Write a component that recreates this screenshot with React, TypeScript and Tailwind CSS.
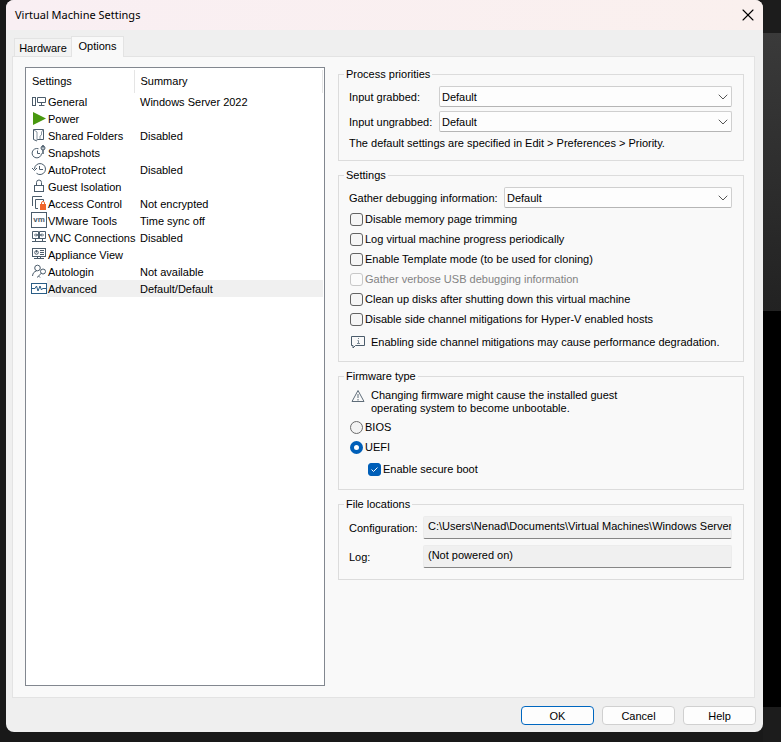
import React, { useState } from "react";
import { ChevronDown, X } from "lucide-react";

type Row = { name: string; summary?: string; icon: React.ReactNode };

const rows: Row[] = [
  {
    name: "General",
    summary: "Windows Server 2022",
    icon: (
      <>
        <rect x="1.5" y="4.5" width="3" height="8" />
        <path d="M6.5 4.5h8v5h-8zM10.5 9.5v3M8 12.5h5.5" />
      </>
    ),
  },
  { name: "Power", icon: <path d="M2 2v13l13-6.500z" fill="#48980f" stroke="none" /> },
  {
    name: "Shared Folders",
    summary: "Disabled",
    icon: (
      <>
        <path d="M6 12.500h6.500v-10h-10v10l3.500 1.500" />
        <path d="M3 3l3 2v8.500M12 3l-1.500 2v3L9 9v3" stroke="#8b98a3" />
      </>
    ),
  },
  {
    name: "Snapshots",
    icon: (
      <>
        <path d="M7.500 4.800A4.700 4.700 0 1 0 10.500 9.500" />
        <path d="M6.500 6.500v3H9" />
        <circle cx="12" cy="4" r="2" fill="#c3cad0" />
        <path d="M12 1v2.500M12 6v4" strokeWidth="1.500" />
      </>
    ),
  },
  {
    name: "AutoProtect",
    summary: "Disabled",
    icon: (
      <>
        <path d="M3.500 8a5.500 5.500 0 1 1 2 4.300" />
        <path d="M1 7l2.500 2.500L6 7M8.500 5v3.500H12" />
      </>
    ),
  },
  {
    name: "Guest Isolation",
    icon: (
      <>
        <rect x="3.500" y="7.500" width="9" height="6" />
        <path d="M5.500 7.500v-3a2.500 2.500 0 0 1 5 0v3" />
      </>
    ),
  },
  {
    name: "Access Control",
    summary: "Not encrypted",
    icon: (
      <>
        <path d="M1.500 11v-9.500h9.500M4.500 13.500v-9h8v1.500M7 13.500H4.500" />
        <rect x="9" y="9" width="6" height="6" fill="#f1652a" stroke="none" />
        <path d="M10.500 9.500V8a1.500 1.500 0 0 1 3 0v1.500" stroke="#f1652a" />
      </>
    ),
  },
  {
    name: "VMware Tools",
    summary: "Time sync off",
    icon: (
      <>
        <rect x="0.500" y="0.500" width="15" height="15" fill="#fff" />
        <text
          x="8"
          y="10"
          textAnchor="middle"
          fontSize="8"
          fontWeight="bold"
          fill="#4b5c6b"
          stroke="none"
        >
          vm
        </text>
      </>
    ),
  },
  {
    name: "VNC Connections",
    summary: "Disabled",
    icon: (
      <>
        <path d="M7.500 2.500h-6v7h13v-7h-6M7.500 2.500v7M8.500 2.500v7" />
        <path d="M3 6h4M13 6H9M5 4.500L6.500 6 5 7.500M11 4.500L9.500 6 11 7.500" />
        <path d="M4.500 9.500v3M11.500 9.500v3M1 12.500h14" />
      </>
    ),
  },
  {
    name: "Appliance View",
    icon: (
      <>
        <rect x="1.500" y="2.500" width="13" height="8" />
        <circle cx="5.500" cy="6.500" r="1.800" />
        <path d="M9 4.500h4M9 6.500h4M9 8.500h4M5.500 4v2.500M6.500 10.500v2M9.500 10.500v2M3 12.500h10" />
      </>
    ),
  },
  {
    name: "Autologin",
    summary: "Not available",
    icon: (
      <>
        <circle cx="6.500" cy="5" r="2.800" />
        <path d="M1.500 13c.3-3 1.800-4.500 4-5" />
        <circle cx="12" cy="8.500" r="2.500" />
        <path d="M10.300 10.300L6 14.500M7.500 13l1.500 1.500" />
      </>
    ),
  },
  {
    name: "Advanced",
    summary: "Default/Default",
    icon: (
      <g stroke="#2a5d86">
        <rect x="0.500" y="3.500" width="15" height="10" fill="#fff" />
        <path d="M1 8.500h3l1.500-2.500 1.500 5 2-5 1.500 4 1-1.500H15" />
      </g>
    ),
  },
];

const debugOptions = [
  { label: "Disable memory page trimming" },
  { label: "Log virtual machine progress periodically" },
  { label: "Enable Template mode (to be used for cloning)" },
  { label: "Gather verbose USB debugging information", disabled: true },
  { label: "Clean up disks after shutting down this virtual machine" },
  { label: "Disable side channel mitigations for Hyper-V enabled hosts" },
];

export default function App() {
  const [selected, setSelected] = useState("Advanced");
  const [firmware, setFirmware] = useState("UEFI");

  return (
    <div className="flex min-h-screen bg-[#191919] pl-1.5 font-['Liberation_Sans',sans-serif] text-[11px] leading-[14px] text-black">
      <div className="flex flex-1 flex-col pb-[10px]">
        <div className="flex flex-1 flex-col overflow-hidden rounded-lg bg-[#efefef]">
          <header className="flex h-[30px] items-center justify-between bg-linear-to-r from-[#f9eff3] to-[#faf0ee] pr-[5px] pl-[9px]">
            <h1 className="font-['Noto_Sans',sans-serif] text-[11px]">Virtual Machine Settings</h1>
            <button type="button" aria-label="Close">
              <X size={20} strokeWidth={1.300} />
            </button>
          </header>

          <div className="flex flex-1 flex-col px-1.5 pt-1.5">
            <div className="relative z-10 -mb-px flex items-end pl-0.5" role="tablist">
              <button
                type="button"
                role="tab"
                aria-selected={false}
                className="h-[19px] w-[57px] border border-r-0 border-[#e3e3e3] bg-[#f3f3f3]"
              >
                Hardware
              </button>
              <button
                type="button"
                role="tab"
                aria-selected
                className="h-[21px] w-[53px] border border-b-0 border-[#e3e3e3] bg-[#f9f9f9] pb-0.5"
              >
                Options
              </button>
            </div>

            <main className="mr-0.5 flex flex-1 gap-[13px] border border-[#e3e3e3] bg-[#f9f9f9] pt-2.5 pr-2.5 pb-[11px] pl-3">
              <div className="w-[300px] shrink-0 border border-[#82878f] bg-white px-px pt-0.5">
                <table className="w-full table-fixed border-collapse text-left">
                  <colgroup>
                    <col className="w-5" />
                    <col className="w-[87px]" />
                    <col />
                  </colgroup>
                  <thead>
                    <tr className="h-[23px]">
                      <th colSpan={2} className="border-r border-[#e5e5e5] pb-0.5 pl-[5px] font-normal">
                        Settings
                      </th>
                      <th className="border-r border-[#e5e5e5] pb-0.5 pl-1.5 font-normal">Summary</th>
                    </tr>
                  </thead>
                  <tbody>
                    {rows.map((row) => (
                      <tr key={row.name} className="h-[17px]" onClick={() => setSelected(row.name)}>
                        <td className="p-0">
                          <svg
                            className="ml-1 block"
                            width="16"
                            height="17"
                            viewBox="0 0 16 17"
                            fill="none"
                            stroke="#4b5c6b"
                          >
                            {row.icon}
                          </svg>
                        </td>
                        <td
                          className={
                            "p-0 pl-px whitespace-nowrap " +
                            (selected === row.name ? "bg-[#f0f0f0]" : "")
                          }
                        >
                          {row.name}
                        </td>
                        <td className={"p-0 pl-1.5 " + (selected === row.name ? "bg-[#f0f0f0]" : "")}>
                          {row.summary}
                        </td>
                      </tr>
                    ))}
                  </tbody>
                </table>
              </div>

              <div className="flex min-w-0 flex-1 flex-col gap-[7px]">
                <Group title="Process priorities">
                  <div className="flex flex-col gap-1 pt-[5px] pb-[10px]">
                    <SelectRow id="grabbed" label="Input grabbed:" labelWidth="w-[90px]" />
                    <SelectRow id="ungrabbed" label="Input ungrabbed:" labelWidth="w-[90px]" />
                    <p>The default settings are specified in Edit &gt; Preferences &gt; Priority.</p>
                  </div>
                </Group>

                <Group title="Settings">
                  <div className="pt-[5px] pb-3">
                    <SelectRow id="debug" label="Gather debugging information:" labelWidth="w-[155px]" />
                    <div className="pt-px">
                      {debugOptions.map((option) => (
                        <Check key={option.label} label={option.label} disabled={option.disabled} />
                      ))}
                    </div>
                    <div className="flex items-center gap-[5px] pt-1.5 pl-px">
                      <svg width="16" height="14" viewBox="0 0 16 14" fill="none" stroke="#4b5c6b">
                        <path d="M1.500 1.500h13v9h-9l-2.500 2.500v-2.500H1.500z" />
                        <path d="M8.500 3v1M7.500 5.500h1v3M7 8.500h3" stroke="#7d8a95" />
                      </svg>
                      <p>Enabling side channel mitigations may cause performance degradation.</p>
                    </div>
                  </div>
                </Group>

                <Group title="Firmware type">
                  <div className="pt-1.5 pb-[10px]">
                    <div className="flex gap-[5px] pb-0.5 pl-px">
                      <svg width="16" height="14" viewBox="0 0 16 14" fill="none" stroke="#5f6d79">
                        <path d="M8 1.500L14 12.500H2z" />
                        <path d="M8 5v4M8 10v1.500" />
                      </svg>
                      <p className="w-64 leading-[13px]">
                        Changing firmware might cause the installed guest operating system to become
                        unbootable.
                      </p>
                    </div>
                    {["BIOS", "UEFI"].map((kind) => (
                      <label key={kind} className="flex h-5 items-center gap-0.5 pl-px">
                        <input
                          type="radio"
                          name="firmware"
                          checked={firmware === kind}
                          onChange={() => setFirmware(kind)}
                          className="size-[13px] appearance-none rounded-full border border-[#6b6b6b] bg-[#f3f3f3] checked:border-4 checked:border-[#005fb8] checked:bg-white"
                        />
                        {kind}
                      </label>
                    ))}
                    <div className="pt-0.5 pl-[18px]">
                      <Check label="Enable secure boot" defaultChecked />
                    </div>
                  </div>
                </Group>

                <Group title="File locations">
                  <div className="flex flex-col gap-1.5 pt-[5px] pb-[11px]">
                    <PathRow
                      id="config"
                      label="Configuration:"
                      value="C:\Users\Nenad\Documents\Virtual Machines\Windows Server"
                    />
                    <PathRow id="log" label="Log:" value="(Not powered on)" />
                  </div>
                </Group>
              </div>
            </main>
          </div>

          <footer className="flex justify-end gap-2 pt-2 pr-[7px] pb-[7px]">
            <button type="button" className="h-[19px] w-[73px] rounded border border-[#0067c0] bg-[#fdfdfd]">
              OK
            </button>
            <button type="button" className="h-[19px] w-[73px] rounded border border-[#d0d0d0] bg-[#fdfdfd]">
              Cancel
            </button>
            <button type="button" className="h-[19px] w-[73px] rounded border border-[#d0d0d0] bg-[#fdfdfd]">
              Help
            </button>
          </footer>
        </div>
      </div>

      {/* desktop behind the dialog */}
      <div className="flex w-[18px] flex-col">
        <div className="h-[33px] bg-[#1c1c1c]" />
        <div className="h-[278px] bg-linear-to-b from-[#3a3a3a] to-[#222222]" />
        <div className="flex-1 bg-black" />
        <div className="h-[35px] bg-[#1c1c1c]" />
      </div>
    </div>
  );
}

function Group({ title, children }: { title: string; children: React.ReactNode }) {
  return (
    <fieldset className="min-w-0 border border-[#dcdcdc] pr-[11px] pl-2.5">
      <legend className="-ml-[5px] px-0.5">{title}</legend>
      {children}
    </fieldset>
  );
}

function SelectRow({ id, label, labelWidth }: { id: string; label: string; labelWidth: string }) {
  return (
    <div className="flex items-center">
      <label htmlFor={id} className={"shrink-0 whitespace-nowrap " + labelWidth}>
        {label}
      </label>
      <div className="relative flex-1">
        <select
          id={id}
          className="block h-[21px] w-full appearance-none rounded-xs border border-[#cfcfcf] border-b-[#b5b5b5] bg-[#fdfdfd] pl-0.5"
        >
          <option>Default</option>
        </select>
        <ChevronDown
          size={16}
          strokeWidth={1.500}
          className="pointer-events-none absolute top-[3px] right-px text-[#555555]"
        />
      </div>
    </div>
  );
}

function Check({
  label,
  disabled,
  defaultChecked,
}: {
  label: string;
  disabled?: boolean;
  defaultChecked?: boolean;
}) {
  return (
    <label className={"flex h-5 items-center gap-0.5 pl-px " + (disabled ? "text-[#838383]" : "")}>
      <span className="relative flex">
        <input
          type="checkbox"
          disabled={disabled}
          defaultChecked={defaultChecked}
          className="peer size-[13px] appearance-none rounded-[3px] border border-[#626262] bg-[#f5f5f5] checked:border-[#005fb8] checked:bg-[#005fb8] disabled:border-[#c8c8c8] disabled:bg-[#fbfbfb]"
        />
        <svg
          className="pointer-events-none absolute inset-0 hidden peer-checked:block"
          width="13"
          height="13"
          viewBox="0 0 13 13"
          fill="none"
          stroke="#fff"
        >
          <path d="M3.500 6.500l2 2 4-4" />
        </svg>
      </span>
      {label}
    </label>
  );
}

function PathRow({ id, label, value }: { id: string; label: string; value: string }) {
  return (
    <div className="flex items-center">
      <label htmlFor={id} className="w-[74px] shrink-0 whitespace-nowrap">
        {label}
      </label>
      <input
        id={id}
        readOnly
        value={value}
        className="h-[23px] min-w-0 flex-1 rounded-xs border border-[#ececec] border-b-[#868686] bg-[#f0f0f0] pb-1 pl-1"
      />
    </div>
  );
}
